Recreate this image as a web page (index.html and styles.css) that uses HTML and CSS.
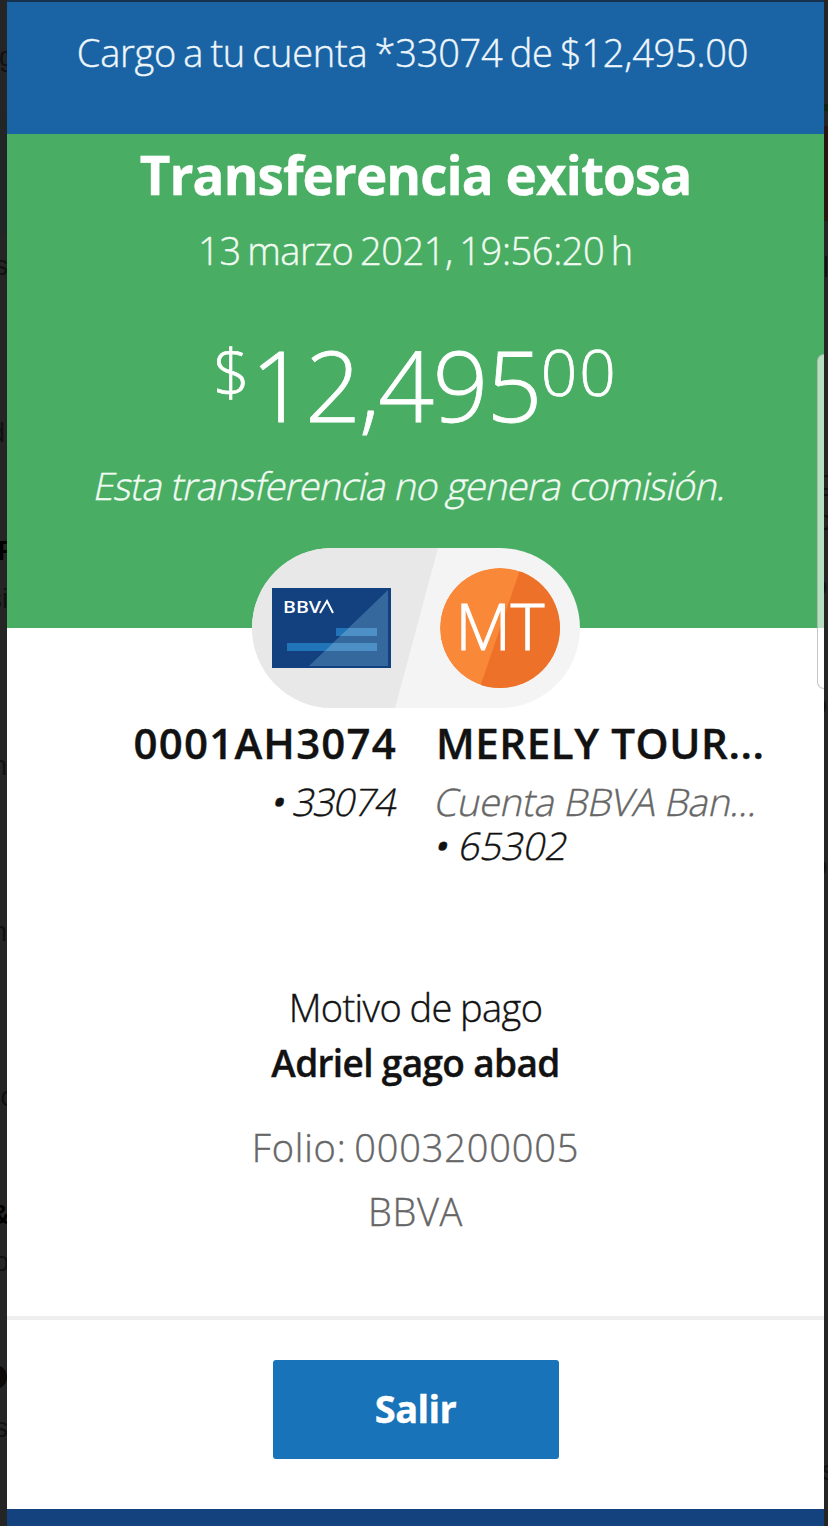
FILE: index.html
```html
<!DOCTYPE html>
<html lang="es">
<head>
    <meta charset="UTF-8">
    <meta name="viewport" content="width=device-width, initial-scale=1.0">
    <title>Transferencia exitosa</title>
    <link rel="stylesheet" href="styles.css">
</head>
<body>
    <svg class="edge edge-left" width="7" height="1526" viewBox="0 0 7 1526">
        <rect class="edge-row" y="119" width="7" height="115"/>
        <text x="14" y="66">Ag</text>
        <text x="8" y="275">s</text>
        <text x="5" y="442">d</text>
        <text class="strong" x="14" y="560">F</text>
        <text x="8" y="608">si</text>
        <text x="7" y="775">n</text>
        <text x="7" y="941">n</text>
        <text x="14" y="1106">c</text>
        <text class="strong" x="10" y="1224">&amp;</text>
        <text x="9" y="1271">o</text>
        <circle class="avatar" cx="-5" cy="1377" r="12"/>
        <text x="8" y="1437">s</text>
    </svg>
    <div class="screen">
        <div class="charge-bar"><span class="charge">Cargo a tu cuenta *33074 de $12,495.00</span></div>

        <div class="summary">
            <h1 class="title">Transferencia exitosa</h1>
            <p class="date">13 marzo 2021, 19:56:20 h</p>
            <div class="amount">
                <span class="amount-sign">$</span>
                <span class="amount-main">12,495</span>
                <span class="amount-cents">00</span>
            </div>
            <p class="fee slanted">Esta transferencia no genera comisión.</p>
            <div class="scroll-thumb"></div>
        </div>

        <div class="badge">
            <svg width="328" height="160" viewBox="0 0 328 160">
                <defs>
                    <clipPath id="pill"><rect width="328" height="160" rx="80"/></clipPath>
                    <clipPath id="coin"><circle cx="248" cy="80" r="60"/></clipPath>
                </defs>
                <g clip-path="url(#pill)">
                    <rect width="328" height="160" fill="#f4f4f4"/>
                    <path d="M0 0H186L143 160H0z" fill="#e8e8e8"/>
                </g>
                <rect x="20" y="40" width="119" height="80" fill="#13417f"/>
                <path d="M136 42V118H57z" fill="#35699d"/>
                <path d="M84 80H125V88H84z" fill="#2174b7"/>
                <path d="M35 95H125V103H35z" fill="#2174b7"/>
                <path d="M97 80H125V88H88z" fill="#4c90c6"/>
                <path d="M81 95H125V103H73z" fill="#4c90c6"/>
                <text class="card-brand" x="31" y="65" textLength="38" lengthAdjust="spacingAndGlyphs">BBV</text>
                <path d="M68 65L75 53L81 65" fill="none" stroke="#fff" stroke-width="2"/>
                <g clip-path="url(#coin)">
                    <circle cx="248" cy="80" r="60" fill="#f98838"/>
                    <path d="M270 16H310V142H227z" fill="#ed7129"/>
                </g>
                <text class="initials" x="248" y="102" text-anchor="middle" textLength="89" lengthAdjust="spacingAndGlyphs">MT</text>
            </svg>
        </div>

        <div class="accounts">
            <div class="account account-from">
                <p class="name">0001AH3074</p>
                <p class="detail detail-from slanted"><span class="dot">•</span> 33074</p>
            </div>
            <div class="account">
                <p class="name name-to">MERELY TOUR...</p>
                <p class="detail detail-bank slanted">Cuenta BBVA Ban...</p>
                <p class="detail slanted"><span class="dot">•</span> 65302</p>
            </div>
        </div>

        <div class="reason">
            <p class="reason-label">Motivo de pago</p>
            <p class="reason-text">Adriel gago abad</p>
            <p class="folio">Folio: 0003200005</p>
            <p class="bank">BBVA</p>
        </div>

        <div class="actions">
            <button class="exit">Salir</button>
        </div>
        <div class="bottom-bar"></div>
    </div>
    <svg class="edge edge-right" width="4" height="1526" viewBox="0 0 4 1526">
        <rect y="104" width="4" height="7" fill="#10210f"/>
        <rect y="126" width="4" height="95" fill="#2a1510"/>
        <rect x="1" y="256" width="2" height="21"/>
        <text x="10" y="490">g</text>
        <text x="8" y="530">o</text>
        <text x="3" y="595">o</text>
        <text x="3" y="714">o</text>
        <text x="3" y="875">o</text>
        <text x="11" y="1480">s</text>
    </svg>
</body>
</html>
```
FILE: styles.css
```css
* {
    box-sizing: border-box;
    margin: 0;
    padding: 0;
}

body {
    font-family: "Open Sans", "Noto Sans", sans-serif;
    display: flex;
    width: 828px;
    height: 1526px;
    overflow: hidden;
    background: #252525;
    color: #121212;
    font-size: 38px;
    font-weight: 300;
    -webkit-text-stroke: 0.4px;
}

.edge {
    display: block;
    flex: none;
    overflow: hidden;
    font: 27px "Liberation Sans", sans-serif;
    fill: #111;
    -webkit-text-stroke: 0;
}

.edge text {
    text-anchor: end;
}

.edge .strong {
    fill: #000;
    font-weight: bold;
}

.edge-row {
    fill: #222525;
}

.avatar {
    fill: #0c0908;
}

.screen {
    width: 817px;
    height: 1526px;
    flex: none;
    display: flex;
    flex-direction: column;
    background: #fff;
    overflow: hidden;
    white-space: nowrap;
}

.charge-bar {
    height: 134px;
    padding: 25px 6px 0 0;
    border-top: 2px solid #17324f;
    background: #1a64a5;
    color: #eef6fb;
    text-align: center;
    line-height: 50px;
    letter-spacing: -0.25px;
    word-spacing: -2.4px;
    flex: none;
}

.summary {
    position: relative;
    height: 494px;
    flex: none;
    background: #49ae63;
    color: #f2fbf3;
    text-align: center;
}

.title {
    padding-top: 10px;
    color: #fff;
    font-size: 53px;
    font-weight: 700;
    line-height: 62px;
    letter-spacing: -0.95px;
}

.date {
    margin-top: 19px;
    line-height: 50px;
    letter-spacing: -0.4px;
    word-spacing: -3px;
}

.amount {
    display: flex;
    justify-content: center;
    margin-top: 54px;
    height: 110px;
    color: #fff;
}

.amount-sign,
.amount-cents {
    font-size: 64px;
    line-height: 86px;
}

.amount-sign {
    margin-right: 1px;
    -webkit-text-stroke: 0.7px;
}

.amount-cents {
    letter-spacing: 2px;
    -webkit-text-stroke: 0.7px;
}

.amount-main {
    font-size: 98px;
    line-height: 110px;
    letter-spacing: -1.8px;
    -webkit-text-stroke: 0.8px;
}

.fee {
    margin-top: 21px;
    padding-right: 9px;
    line-height: 50px;
    letter-spacing: -0.8px;
}

.slanted {
    transform: skewX(-12deg);
}

.scroll-thumb {
    position: absolute;
    top: 220px;
    right: 0;
    width: 7px;
    height: 335px;
    border: 1px solid rgba(160, 160, 160, 0.6);
    border-right: none;
    border-radius: 7px 0 0 7px;
    background: rgba(255, 255, 255, 0.6);
}

.badge {
    position: relative;
    height: 160px;
    flex: none;
    margin: -80px 0 0 245px;
}

.badge svg {
    display: block;
}

.card-brand {
    fill: #fff;
    font-size: 17px;
    font-weight: 600;
    -webkit-text-stroke: 0;
}

.initials {
    fill: #fff;
    stroke: #fff;
    stroke-width: 1.2px;
    font-size: 64px;
    font-weight: 300;
}

.accounts {
    display: grid;
    grid-template-columns: 390px 1fr;
    column-gap: 39px;
    height: 267px;
    flex: none;
    padding-top: 10px;
}

.account-from {
    text-align: right;
}

.name {
    font-size: 42px;
    font-weight: 600;
    line-height: 50px;
    letter-spacing: 1.2px;
}

.name-to {
    letter-spacing: 0.6px;
}

.detail {
    line-height: 44px;
}

.name + .detail {
    margin-top: 11px;
}

.detail-from {
    letter-spacing: -1.2px;
}

.detail-bank {
    color: #666;
    letter-spacing: -0.3px;
}

.dot {
    font-weight: 400;
}

.reason {
    height: 341px;
    flex: none;
    padding-top: 5px;
    text-align: center;
}

.reason-label {
    line-height: 55px;
    letter-spacing: -0.6px;
    word-spacing: -1px;
}

.reason-text {
    font-size: 37px;
    font-weight: 600;
    line-height: 55px;
    letter-spacing: -0.65px;
}

.folio {
    margin-top: 27px;
    color: #666;
    line-height: 60px;
    letter-spacing: 0.8px;
    word-spacing: -3px;
}

.bank {
    color: #666;
    line-height: 68px;
    letter-spacing: 0.7px;
}

.actions {
    height: 193px;
    flex: none;
    border-top: 4px solid #eee;
    padding-top: 40px;
    text-align: center;
}

.exit {
    width: 286px;
    height: 99px;
    padding-bottom: 3px;
    border: none;
    border-radius: 3px;
    background: #1873b8;
    color: #fff;
    font: 700 38px "Open Sans", sans-serif;
    letter-spacing: -0.6px;
}

.bottom-bar {
    flex: 1;
    background: #14427e;
}
```
